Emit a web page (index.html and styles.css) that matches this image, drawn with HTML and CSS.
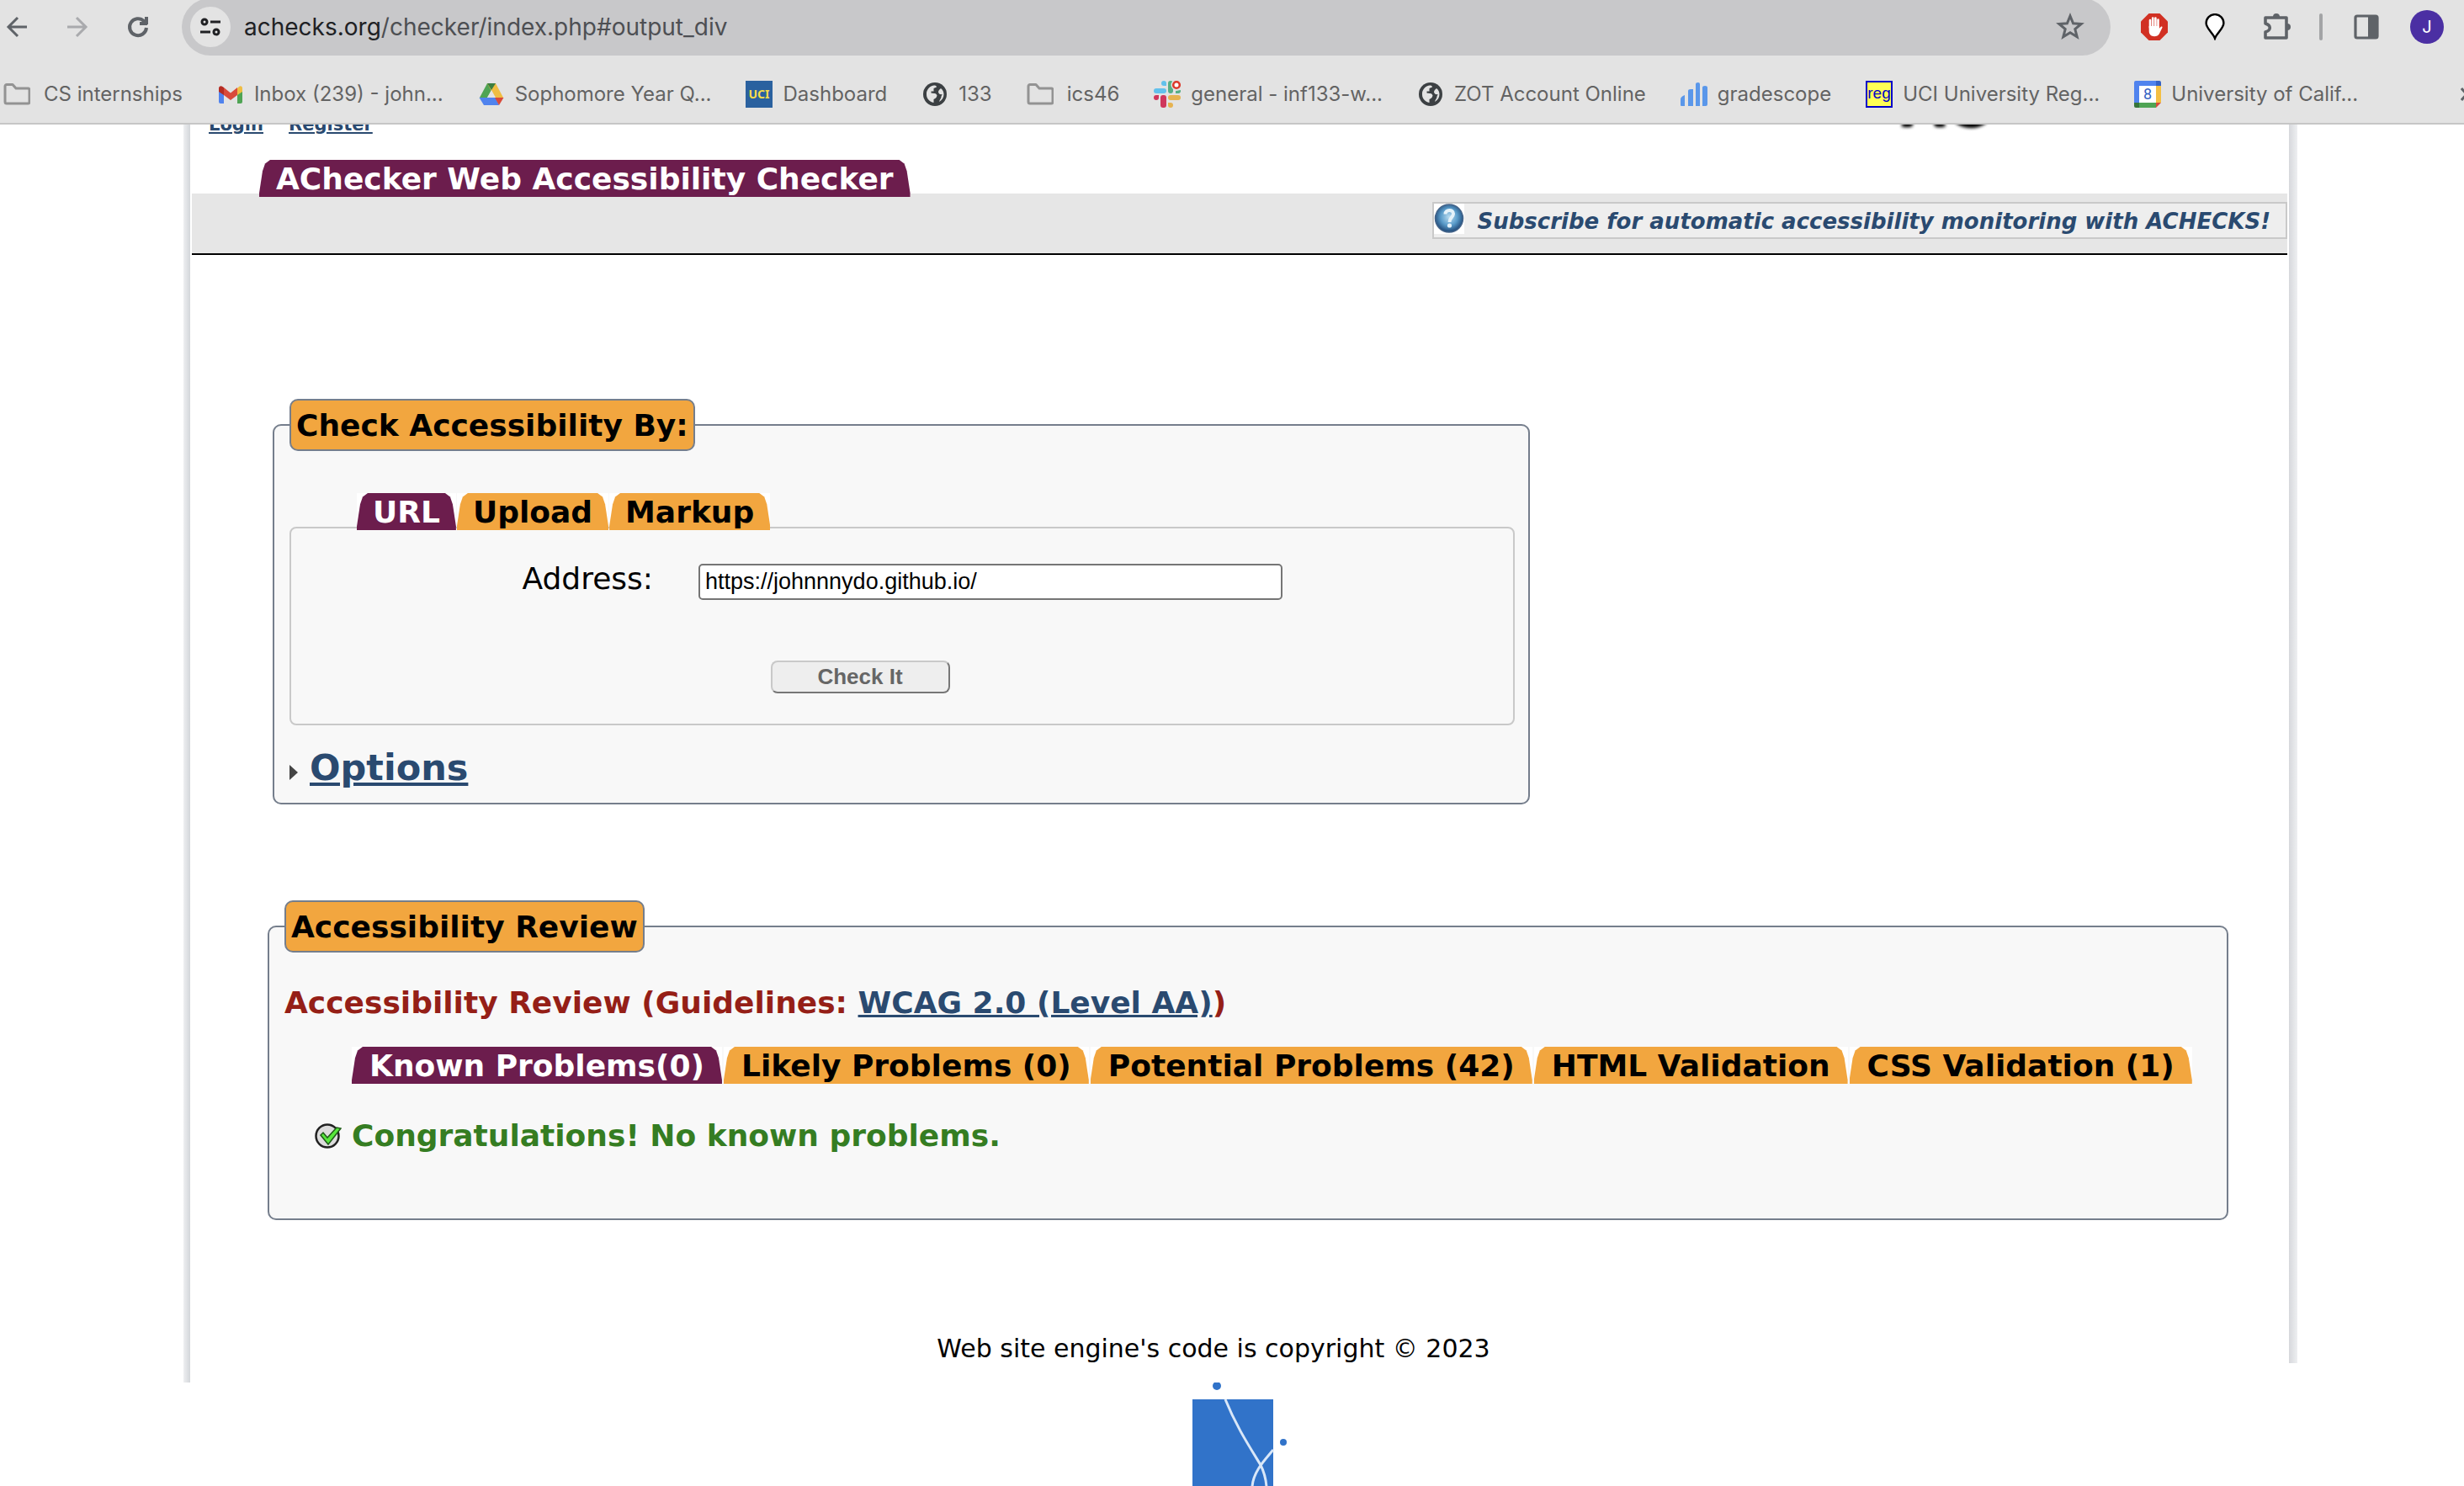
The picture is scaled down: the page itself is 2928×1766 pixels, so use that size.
FILE: index.html
```
<!DOCTYPE html>
<html lang="en">
<head>
<meta charset="utf-8">
<title>AChecker Web Accessibility Checker</title>
<link rel="stylesheet" href="styles.css">
</head>
<body>
<header class="browser">
  <div class="toolbar">
    <div class="nav-buttons">
      <button class="tool" aria-label="Back"><svg width="36" height="36" viewBox="0 0 36 36" fill="none" stroke="#5f6368" stroke-width="3"><path d="M30 18H8M19 7L8 18l11 11"/></svg></button>
      <button class="tool" aria-label="Forward"><svg width="36" height="36" viewBox="0 0 36 36" fill="none" stroke="#a9aaad" stroke-width="3"><path d="M6 18h22M17 7l11 11-11 11"/></svg></button>
      <button class="tool" aria-label="Reload"><svg width="36" height="36" viewBox="0 0 36 36" fill="none" stroke="#5f6368" stroke-width="4"><path d="M28 19a10 10 0 1 1-3-8"/><path d="M20 14h9M28 6v9" stroke-width="4"/><path d="M22 14l6-6v6z" fill="#5f6368" stroke-width="1"/></svg></button>
    </div>
    <div class="omnibox">
      <button class="site-info" aria-label="Site information"><svg width="28" height="28" viewBox="0 0 28 28" fill="none" stroke="#202124" stroke-width="3"><circle cx="7" cy="8" r="3"/><path d="M14 8h12M2 20h12"/><circle cx="21" cy="20" r="3"/></svg></button>
      <div class="address-text"><span class="host">achecks.org</span>/checker/index.php#output_div</div>
      <button class="tool" aria-label="Bookmark this page"><svg width="36" height="36" viewBox="0 0 36 36" fill="none" stroke="#5f6368" stroke-width="3"><path d="M18 5l3.600 8.800 9.500.7-7.300 6 2.400 9.300L18 24.700l-8.200 5.100 2.400-9.300-7.300-6 9.500-.7z"/></svg></button>
    </div>
    <div class="extensions">
      <button class="ext" aria-label="Ad blocker"><svg width="32" height="32" viewBox="0 0 32 32"><path d="M9.500 0h13L32 9.500v13L22.500 32h-13L0 22.500v-13z" fill="#d13023"/><g stroke="#fff" stroke-width="2.600" stroke-linecap="round"><path d="M11 17V8M14.200 16V5.500M17.400 16V5.500M20.500 17V7.500"/></g><path d="M9.700 15h12.100v3l2-2.200c1-.9 2.200 0 1.600 1.200L22 24c-1.300 2.200-3.200 3.200-6 3.200-4 0-6.300-2.400-6.300-6.400z" fill="#fff"/></svg></button>
      <button class="ext" aria-label="Pin extension"><svg width="32" height="32" viewBox="0 0 32 32" fill="#fff" stroke="#000" stroke-width="2.400"><path d="M16 29.500C14 24 5.600 17.500 5.600 11.500a10.400 10.400 0 0 1 20.800 0C26.400 17.500 18 24 16 29.500z"/></svg></button>
      <button class="ext" aria-label="Extensions"><svg width="36" height="36" viewBox="0 0 36 36" fill="none" stroke="#5f6368" stroke-width="3.600"><path d="M6 7h25v24H6v-7c7-2 7-8 0-10z" stroke-linejoin="round"/><path d="M15 6a4 4 0 0 1 8 0zM32 14a4 4 0 0 1 0 8z" fill="#5f6368" stroke="none"/></svg></button>
      <span class="divider"></span>
      <button class="panel-btn" aria-label="Side panel"><svg width="32" height="32" viewBox="0 0 32 32"><rect x="3" y="3" width="26" height="26" rx="2" fill="none" stroke="#5f6368" stroke-width="3.200"/><path d="M18 3h11v26H18z" fill="#5f6368"/></svg></button>
      <button class="avatar">J</button>
    </div>
  </div>
  <nav class="bookmarks" aria-label="Bookmarks">
    <a class="bookmark folder" href="#"><svg width="32" height="32" viewBox="0 0 32 32" fill="none" stroke="#939393" stroke-width="3" stroke-linejoin="round"><path d="M2 6.500a2 2 0 0 1 2-2h7l4 4.500h14a2 2 0 0 1 2 2v14a2 2 0 0 1-2 2H4a2 2 0 0 1-2-2z"/></svg>CS internships</a>
    <a class="bookmark" href="#"><svg width="32" height="32" viewBox="0 0 32 32"><path d="M2 9h6v18H4a2 2 0 0 1-2-2z" fill="#5083ee"/><path d="M24 9h6v16a2 2 0 0 1-2 2h-4z" fill="#4fa454"/><path d="M24 9l2-2c2-1.500 4-.5 4 2v4l-6 4z" fill="#f0bd42"/><path d="M8 8l8 6.500L24 8v9l-8 6-8-6z" fill="#d94a3a"/><path d="M2 9c0-3 3-3.500 4.500-2L8 8v9l-6-4z" fill="#b52c23"/></svg>Inbox (239) - john...</a>
    <a class="bookmark" href="#"><svg width="32" height="32" viewBox="0 0 32 32"><path d="M11 3h10L11 20H2z" fill="#4fa454"/><path d="M11 3h10l9 17H20z" fill="#f0bd42"/><path d="M11 3h10l-5 8z" fill="#3b7d3f"/><path d="M1.500 20H21l4 9H7z" fill="#5083ee"/><path d="M20 20h10.500L25 29z" fill="#d94a3a"/><path d="M11 20l5-9 5 9z" fill="#e3e3e3"/></svg>Sophomore Year Q...</a>
    <a class="bookmark" href="#"><svg width="32" height="32" viewBox="0 0 32 32"><path d="M0 0h32v32H0z" fill="#2a619f"/><text x="16" y="21" text-anchor="middle" class="uci-text">UCI</text></svg>Dashboard</a>
    <a class="bookmark" href="#"><svg width="32" height="32" viewBox="0 0 32 32"><circle cx="16" cy="16" r="14" fill="#3c4043"/><path d="M6 14c1-5 5-8 9-8.500 1.500 0 3 .5 3 2L14.500 9v3.500h-3v2c3 .5 6 0 7 3-.5 3-3 4-4 4.500V26c-5-1-8.500-5-8.500-9.500zM23 9c2.500 2 3.500 4.500 3.500 7 0 4-2 7-5.500 9 .5-2.500 2.500-4 2.500-6 0-1.500 1-1.500 1-3-2.500.5-4-.5-4.500-2.500 0-2 1.500-3 3-4.500z" fill="#e3e3e3"/></svg>133</a>
    <a class="bookmark folder" href="#"><svg width="32" height="32" viewBox="0 0 32 32" fill="none" stroke="#939393" stroke-width="3" stroke-linejoin="round"><path d="M2 6.500a2 2 0 0 1 2-2h7l4 4.500h14a2 2 0 0 1 2 2v14a2 2 0 0 1-2 2H4a2 2 0 0 1-2-2z"/></svg>ics46</a>
    <a class="bookmark" href="#"><svg width="32" height="32" viewBox="0 0 32 32"><g fill="#62c1ec"><rect x="0" y="9" width="15" height="6" rx="3"/><path d="M12 0a3 3 0 0 1 3 3v3h-3a3 3 0 0 1 0-6z"/></g><g fill="#58ae85"><rect x="17" y="0" width="6" height="15" rx="3"/><path d="M26 15v-3l6-1a3 3 0 0 1-3 4z"/></g><g fill="#cf375c"><rect x="8" y="17" width="7" height="15" rx="3"/><path d="M0 20a3 3 0 0 1 3-3h3v3a3 3 0 0 1-6 0z"/></g><g fill="#e6b350"><rect x="17" y="17" width="15" height="6" rx="3"/><path d="M17 26h3a3 3 0 1 1-3 3z"/></g><circle cx="27" cy="5" r="6.500" fill="#e3e3e3"/><circle cx="27" cy="5" r="3.800" fill="#fff" stroke="#dc3b2c" stroke-width="2.600"/></svg>general - inf133-w...</a>
    <a class="bookmark" href="#"><svg width="32" height="32" viewBox="0 0 32 32"><circle cx="16" cy="16" r="14" fill="#3c4043"/><path d="M6 14c1-5 5-8 9-8.500 1.500 0 3 .5 3 2L14.500 9v3.500h-3v2c3 .5 6 0 7 3-.5 3-3 4-4 4.500V26c-5-1-8.500-5-8.500-9.500zM23 9c2.500 2 3.500 4.500 3.500 7 0 4-2 7-5.500 9 .5-2.500 2.500-4 2.500-6 0-1.500 1-1.500 1-3-2.500.5-4-.5-4.500-2.500 0-2 1.500-3 3-4.500z" fill="#e3e3e3"/></svg>ZOT Account Online</a>
    <a class="bookmark" href="#"><svg width="32" height="32" viewBox="0 0 32 32" fill="#5a97ea"><path d="M0 22q0-3 5-5v13H1q-1 0-1-1zM9 12q0-2 3-2h3v20H9zM18 4q0-2 3-2 2 0 2 2v26h-5zM26 8q0-2 3-2 3 0 3 2v20q0 2-2 2h-4z"/></svg>gradescope</a>
    <a class="bookmark" href="#"><svg width="32" height="32" viewBox="0 0 32 32"><path d="M1 1h30v30H1z" fill="#ffff54" stroke="#0000c8" stroke-width="2"/><text x="16" y="21" text-anchor="middle" class="reg-text">reg</text></svg>UCI University Reg...</a>
    <a class="bookmark" href="#"><svg width="32" height="32" viewBox="0 0 32 32"><path d="M2 0h24v6H6v20H0V2a2 2 0 0 1 2-2z" fill="#5083ee"/><path d="M26 0h4a2 2 0 0 1 2 2v4h-6z" fill="#3563c4"/><path d="M26 6h6v20h-6z" fill="#f3bf43"/><path d="M6 26h20v6H6z" fill="#4fa454"/><path d="M0 26h6v6H2a2 2 0 0 1-2-2z" fill="#37753b"/><path d="M26 26h6l-6 6z" fill="#d94a3a"/><path d="M6 6h20v20H6z" fill="#fff"/><text x="16" y="22" text-anchor="middle" class="cal-text">8</text></svg>University of Calif...</a>
    <button class="more" aria-label="More bookmarks"><svg width="16" height="16" viewBox="0 0 16 16" fill="none" stroke="#5f6368" stroke-width="3"><path d="M1 1l6 7-6 7M9 1l6 7-6 7"/></svg></button>
  </nav>
</header>

<div class="page">
  <div class="top">
    <a href="#">Login</a>
    <a href="#">Register</a>
    <div class="logo">AC</div>
  </div>
  <div class="title-row"><h1 class="tab active">AChecker Web Accessibility Checker</h1></div>
  <div class="banner">
    <a class="subscribe" href="#"><svg width="36" height="36" viewBox="0 0 36 36"><defs><radialGradient id="q" cx="50%" cy="45%" r="55%"><stop offset="0" stop-color="#b9dcf0"/><stop offset=".55" stop-color="#5a9cca"/><stop offset="1" stop-color="#1d4675"/></radialGradient></defs><path d="M0 0h36v36H0z" fill="#fff"/><circle cx="18" cy="17.500" r="16.500" fill="url(#q)" stroke="#46658a" stroke-width="1.500"/><path d="M13.500 12.500c0-6 9.500-6 9.500-.5 0 4-4.500 4.500-4.500 10" fill="none" stroke="#e4f2fa" stroke-width="4"/><circle cx="18.500" cy="26" r="2.600" fill="#e4f2fa"/></svg><span>Subscribe for automatic accessibility monitoring with ACHECKS!</span></a>
  </div>

  <main>
    <form class="check-form">
      <fieldset class="panel">
        <legend>Check Accessibility By:</legend>
        <div class="tabs">
          <button type="button" class="tab active">URL</button>
          <button type="button" class="tab">Upload</button>
          <button type="button" class="tab">Markup</button>
        </div>
        <div class="tab-body">
          <div class="field">
            <label for="uri">Address:</label>
            <input id="uri" type="text" value="https://johnnnydo.github.io/">
          </div>
          <div class="actions"><button type="button" class="submit">Check It</button></div>
        </div>
        <div class="options"><svg width="10" height="18" viewBox="0 0 10 18"><path d="M0 0l10 9-10 9z" fill="#444"/></svg><a href="#">Options</a></div>
      </fieldset>
    </form>

    <section class="review">
      <fieldset class="panel">
        <legend>Accessibility Review</legend>
        <h2>Accessibility Review (Guidelines: <a href="#">WCAG 2.0 (Level AA)</a>)</h2>
        <div class="tabs">
          <button type="button" class="tab active">Known Problems(0)</button>
          <button type="button" class="tab">Likely Problems (0)</button>
          <button type="button" class="tab">Potential Problems (42)</button>
          <button type="button" class="tab">HTML Validation</button>
          <button type="button" class="tab">CSS Validation (1)</button>
        </div>
        <div class="message"><svg width="32" height="32" viewBox="0 0 32 32"><circle cx="15" cy="16" r="13.500" fill="#dcdcdc" stroke="#222" stroke-width="2.500"/><path d="M7 15l3-3 5 6L26 6l5 1-15 19z" fill="#57e83c" stroke="#1f5a18" stroke-width="1.500"/></svg>Congratulations! No known problems.</div>
      </fieldset>
    </section>
  </main>
  <footer>Web site engine's code is copyright © 2023</footer>
</div>
<div class="sponsor"><svg width="112" height="124" viewBox="0 0 112 124"><path d="M0 20h96v104H0z" fill="#3173c9"/><circle cx="29" cy="4" r="5" fill="#3173c9"/><circle cx="108" cy="71" r="4" fill="#3173c9"/><path d="M39 20C52 52 67 75 81 98q6 12 7 26M96 80C86 92 72 106 71 124" fill="none" stroke="#d9e7f8" stroke-width="3"/></svg></div>
</body>
</html>
```
FILE: styles.css
```
* { box-sizing: border-box; }
html, body { height: 100%; }
body {
  margin: 0;
  overflow: hidden;
  background: #fff;
  color: #000;
  font-family: "DejaVu Sans", Verdana, sans-serif;
  font-size: 36px;
  line-height: 44px;
}
button { padding: 0; border: 0; background: none; font: inherit; color: inherit; }
svg { display: block; flex: none; }
a { color: #2a4a70; }

/* Browser chrome */
.browser {
  height: 148px;
  background: #e3e3e3;
  border-bottom: 2px solid #c6c6c6;
  overflow: hidden;
  font-family: Inter, Roboto, sans-serif;
}
.toolbar { display: flex; align-items: center; height: 64px; padding: 0 24px 0 2px; }
.nav-buttons { display: flex; gap: 36px; margin-right: 34px; }
.omnibox {
  flex: 1;
  display: flex;
  align-items: center;
  gap: 16px;
  height: 68px;
  padding: 0 30px 0 10px;
  border-radius: 34px;
  background: #c8c8ca;
}
.site-info {
  display: grid;
  place-items: center;
  width: 48px;
  height: 48px;
  border-radius: 50%;
  background: #e3e3e3;
}
.address-text { flex: 1; font-size: 28px; color: #4d4f53; }
.host { color: #202124; }
.extensions { display: flex; align-items: center; gap: 32px; margin-left: 32px; }
.ext { display: grid; place-items: center; width: 40px; }
.divider { width: 4px; height: 32px; border-radius: 2px; background: #a3a4a6; }
.panel-btn { margin: 0 4px; }
.avatar {
  width: 40px;
  height: 40px;
  border-radius: 50%;
  background: #4b2fa3;
  color: #fff;
  font-size: 20px;
  line-height: 40px;
}
.bookmarks { display: flex; align-items: center; gap: 41px; height: 82px; margin-top: 7px; padding-left: 4px; }
.bookmark {
  display: flex;
  align-items: center;
  gap: 12px;
  color: #636363;
  font-size: 24px;
  line-height: 32px;
  text-decoration: none;
  white-space: nowrap;
}
.folder { gap: 16px; }
.more { margin: 0 -12px 0 auto; }
.uci-text { font: bold 14px "Noto Sans", sans-serif; fill: #f8dc4a; }
.reg-text { font: 19px "Liberation Sans", sans-serif; fill: #0000c8; }
.cal-text { font: 18px Roboto, sans-serif; fill: #3563c4; }

/* Page frame with soft side rules */
.page {
  display: flow-root;
  overflow: clip;
  margin: 0 198px 0 218px;
  padding: 0 12px 0 10px;
  background:
    linear-gradient(to right, #eeeff1, #d3d6da) left top / 8px 100% no-repeat,
    linear-gradient(to right, #d6d8dc, #eeeff1) right top / 10px calc(100% - 23px) no-repeat;
}
.top {
  display: flex;
  gap: 30px;
  height: 54px;
  margin-top: -12px;
  padding-left: 20px;
  font-size: 21px;
  font-weight: bold;
  line-height: 24px;
}
.logo {
  margin: -60px 352px 0 auto;
  font: bold 76px/80px "Liberation Sans", Arial, sans-serif;
  text-shadow: 2px 8px 4px #000, 2px 8px 4px #000;
}
.title-row { display: flex; position: relative; padding-left: 80px; margin-bottom: -4px; }
h1, h2 { margin: 0; font-size: 36px; }

.tab {
  position: relative;
  z-index: 0;
  height: 44px;
  padding: 2px 20px 0;
  background: #fff;
  font-weight: bold;
  line-height: 42px;
  white-space: nowrap;
}
.tab::before {
  content: "";
  position: absolute;
  z-index: -1;
  inset: 0;
  background: #f2a63f;
  clip-path: polygon(0 100%, 0 90%, 4px 30%, 7px 10%, 13px 0, calc(100% - 13px) 0, calc(100% - 7px) 10%, calc(100% - 4px) 30%, 100% 90%, 100% 100%);
}
.tab.active { color: #fff; }
.tab.active::before { background: #6c1d4d; }

.banner {
  display: flex;
  justify-content: flex-end;
  align-items: flex-start;
  height: 73px;
  padding-top: 10px;
  background: #e6e6e6;
  border-bottom: 2px solid #000;
}
.subscribe {
  display: flex;
  gap: 16px;
  height: 44px;
  padding-right: 18px;
  border: 2px solid #c9c9c9;
  background: #eee;
  font-size: 26px;
  font-weight: bold;
  font-style: italic;
  line-height: 42px;
  text-decoration: none;
}

/* Panels */
.check-form { width: 60%; margin: 171px 0 114px 96px; }
.review { margin: 0 70px 0 90px; }
.panel {
  min-width: 0;
  margin: 0;
  padding: 0 16px 14px 18px;
  border: 2px solid #757e8c;
  border-radius: 10px;
  background: #f8f8f8;
}
legend {
  height: 62px;
  padding: 2px 6px 0;
  border: 2px solid #757e8c;
  border-radius: 10px;
  background: #f2a63f;
  font-weight: bold;
  line-height: 56px;
}
.tabs { display: flex; gap: 1px; position: relative; padding-left: 80px; }
.check-form .tabs { margin: 50px 0 -4px; }
.check-form .tab { padding: 2px 19px 0; }
.review .tabs { gap: 2px; }
.review .tab { padding: 2px 21px 0; }
.tab-body {
  padding: 42px 0 36px;
  border: 2px solid #c9c9c9;
  border-radius: 8px;
}
.field { display: grid; grid-template-columns: 1fr 2fr; align-items: start; }
.field label { padding-right: 54px; text-align: right; line-height: 36px; }
.field input {
  width: 694px;
  height: 43px;
  padding: 0 6px;
  border: 2px solid #757575;
  border-radius: 5px;
  background: #fff;
  color: #000;
  font: 27px "Liberation Sans", Arial, sans-serif;
}
.actions { margin-top: 72px; padding-right: 100px; text-align: center; }
.actions .submit {
  display: block;
  width: 213px;
  height: 39px;
  margin: 0 auto;
  border: 2px solid;
  border-color: #c9c9c9 #777 #777 #c9c9c9;
  border-radius: 8px;
  background: #eee;
  color: #666;
  font: bold 26px "Liberation Sans", Arial, sans-serif;
}
.options {
  display: flex;
  align-items: center;
  gap: 14px;
  margin-top: 22px;
  font-size: 43px;
  font-weight: bold;
  line-height: 56px;
}
.options svg { margin-top: 12px; }

.review h2 { margin: 38px 0 30px; color: #951f17; }
.review .panel { padding-bottom: 76px; }
.message {
  display: flex;
  align-items: center;
  gap: 12px;
  margin: 40px 0 0 36px;
  color: #357d22;
  font-weight: bold;
}

footer {
  margin-top: 135px;
  padding: 0 62px 22px 0;
  font-size: 30px;
  line-height: 36px;
  text-align: center;
}
.sponsor { display: flex; justify-content: center; padding-left: 18px; }
```
